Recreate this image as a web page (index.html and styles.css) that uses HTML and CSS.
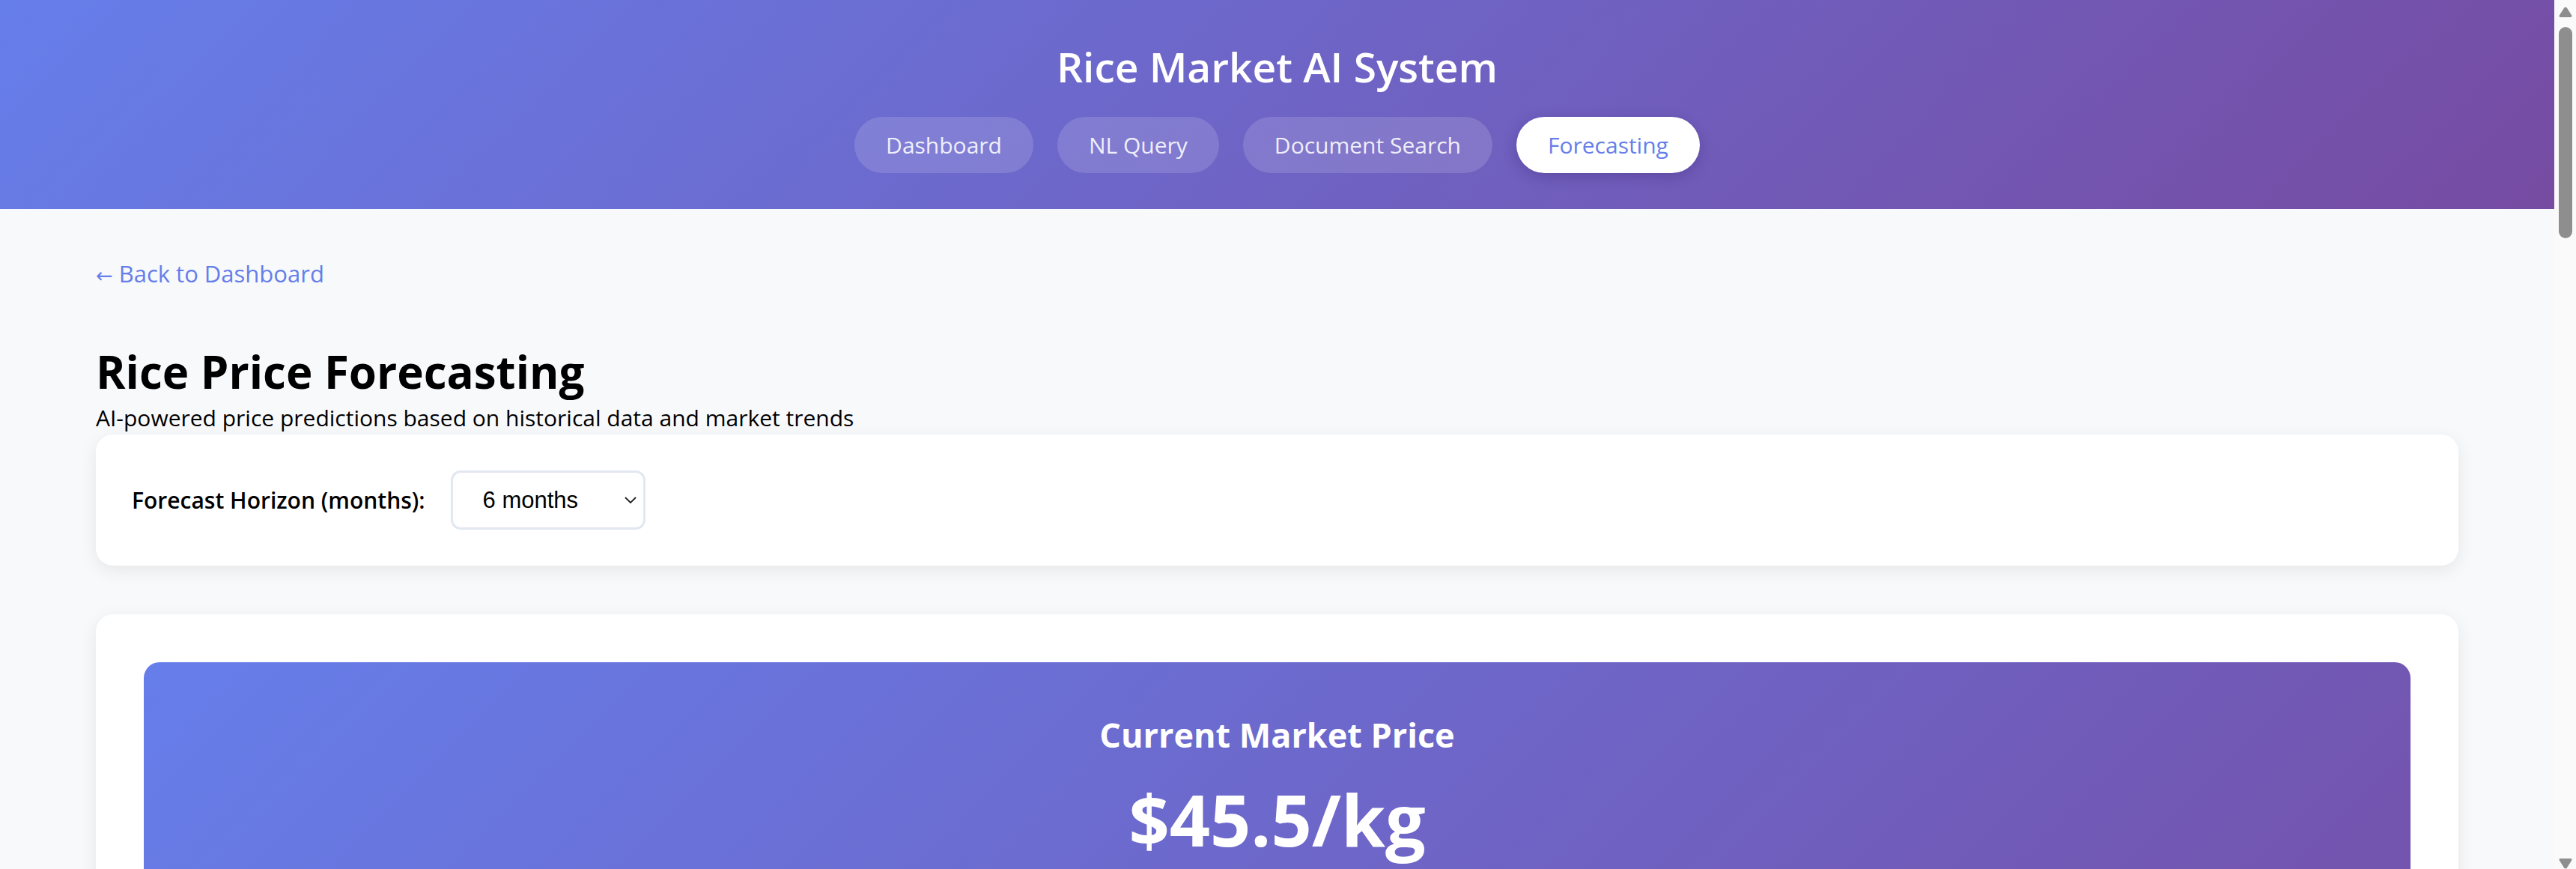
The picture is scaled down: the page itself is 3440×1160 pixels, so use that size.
FILE: index.html
```html
<!DOCTYPE html>
<html lang="en">
<head>
<meta charset="utf-8">
<title>Rice Market AI System - Forecasting</title>
<link rel="stylesheet" href="styles.css">
</head>
<body>
<header class="topbar">
  <h1 class="brand">Rice Market AI System</h1>
  <nav class="nav">
    <a class="nav-link" href="#">Dashboard</a>
    <a class="nav-link" href="#">NL Query</a>
    <a class="nav-link" href="#">Document Search</a>
    <a class="nav-link active" href="#">Forecasting</a>
  </nav>
</header>
<main class="page">
  <a class="back-link" href="#"><span class="back-arrow">←</span> Back to Dashboard</a>
  <h2 class="page-title">Rice Price Forecasting</h2>
  <p class="page-subtitle">AI-powered price predictions based on historical data and market trends</p>
  <section class="card controls">
    <label class="control-label" for="horizon">Forecast Horizon (months):</label>
    <select class="control-select" id="horizon">
      <option>3 months</option>
      <option selected>6 months</option>
      <option>12 months</option>
    </select>
  </section>
  <section class="card forecast">
    <div class="price-hero">
      <h3 class="price-label">Current Market Price</h3>
      <div class="price-value">$45.5/kg</div>
    </div>
  </section>
</main>
<div class="scrollbar" aria-hidden="true">
  <svg class="sb-arrow" width="18" height="14" viewBox="0 0 18 14"><path d="M7.3 1.2 Q9 -0.4 10.7 1.2 L17.2 11.4 Q18.2 14 15.5 14 L2.5 14 Q-0.2 14 0.8 11.4 Z" fill="#8e8e8e"/></svg>
  <div class="sb-track"><div class="sb-thumb"></div></div>
  <svg class="sb-arrow" width="18" height="14" viewBox="0 0 18 14"><path d="M7.3 12.8 Q9 14.4 10.7 12.8 L17.2 2.6 Q18.2 0 15.5 0 L2.5 0 Q-0.2 0 0.8 2.6 Z" fill="#8e8e8e"/></svg>
</div>
</body>
</html>
```
FILE: styles.css
```css
html {
  background: #f8f9fb;
}
body {
  margin: 0 29px 0 0;
  font-family: "Open Sans", "Noto Sans", sans-serif;
  color: #000;
  background: #f8f9fb;
}
.topbar {
  background: linear-gradient(135deg, #667eea 0%, #764ba2 100%);
  padding: 56px 0 48px;
  display: flex;
  flex-direction: column;
  align-items: center;
}
.brand {
  margin: 0;
  font-size: 55px;
  line-height: 66px;
  font-weight: 600;
  color: #fff;
}
.nav {
  margin-top: 34px;
  display: flex;
  gap: 32px;
}
.nav-link {
  display: block;
  padding: 20px 42px 19px;
  font-size: 30px;
  line-height: 36px;
  font-weight: 500;
  color: rgba(255, 255, 255, 0.9);
  background: rgba(255, 255, 255, 0.14);
  border-radius: 40px;
  text-decoration: none;
}
.nav-link.active {
  background: #fff;
  color: #667eea;
  box-shadow: 0 5px 18px rgba(40, 20, 90, 0.25);
}
.page {
  padding: 68px 128px 0;
  min-height: 4000px;
}
.back-link {
  display: inline-block;
  font-size: 31px;
  line-height: 37px;
  font-weight: 500;
  color: #667eea;
  text-decoration: none;
}
.back-arrow {
  font-family: "DejaVu Sans", sans-serif;
  font-size: 27px;
  font-weight: 400;
}
.page-title {
  margin: 74px 0 0;
  font-size: 60px;
  line-height: 72px;
  font-weight: 700;
}
.page-subtitle {
  margin: 8px 0 0;
  font-size: 30px;
  line-height: 36px;
}
.card {
  background: #fff;
  border-radius: 23px;
  box-shadow: 0 6px 24px rgba(0, 0, 0, 0.08);
}
.controls {
  margin-top: 4px;
  padding: 48px;
  display: flex;
  align-items: center;
  gap: 34px;
}
.control-label {
  font-size: 30px;
  font-weight: 600;
}
.control-select {
  appearance: none;
  -webkit-appearance: none;
  box-sizing: border-box;
  width: 260px;
  height: 79px;
  padding: 0 0 0 40px;
  border: 3px solid #e2e8f0;
  border-radius: 13px;
  font-family: "Liberation Sans", Arial, sans-serif;
  font-size: 31px;
  color: #000;
  background-color: #fff;
  background-repeat: no-repeat;
  background-position: right 9px center;
  background-size: 16px 9px;
  background-image: url("data:image/svg+xml;utf8,<svg xmlns='http://www.w3.org/2000/svg' viewBox='0 0 16 9'><path d='M1 1 L8 8 L15 1' fill='none' stroke='%23222' stroke-width='1.8'/></svg>");
}
.forecast {
  margin-top: 65px;
  padding: 64px;
}
.price-hero {
  background: linear-gradient(135deg, #667eea 0%, #764ba2 100%);
  border-radius: 21px;
  padding: 70px 64px 64px;
  text-align: center;
  color: #fff;
  min-height: 800px;
}
.price-label {
  margin: 0;
  font-size: 45px;
  line-height: 54px;
  font-weight: 700;
}
.price-value {
  margin-top: 28px;
  font-size: 95px;
  line-height: 114px;
  font-weight: 700;
}
.scrollbar {
  position: fixed;
  top: 0;
  right: 0;
  bottom: 0;
  width: 29px;
  background: #fafafa;
  display: flex;
  flex-direction: column;
  align-items: flex-start;
  padding: 9px 0 0 6px;
  box-sizing: border-box;
}
.sb-track {
  flex: 1;
  padding-top: 13px;
}
.sb-thumb {
  width: 18px;
  height: 282px;
  border-radius: 9px;
  background: #8e8e8e;
}
```
